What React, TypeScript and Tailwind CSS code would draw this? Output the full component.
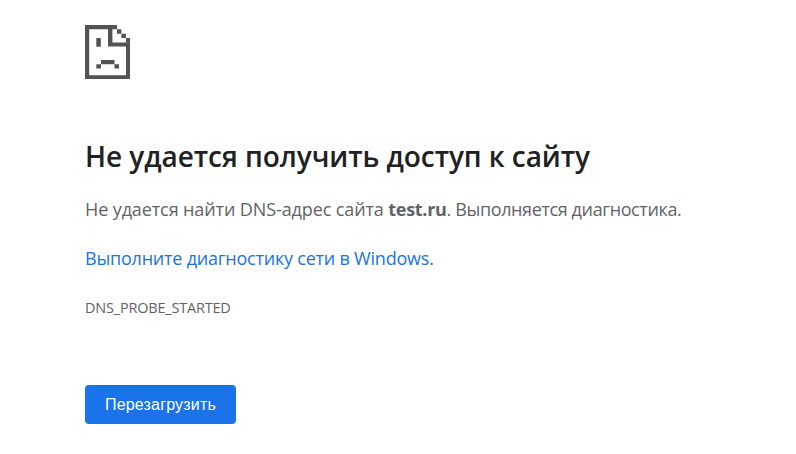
import React from "react"

// Sad page icon, drawn on a coarse pixel grid
const SadPageIcon = () => (
	<svg className="block h-[54.4px] w-[45.2px]" viewBox="0 0 45.2 54.4" fill="#535353">
		<path d="M0 0H32V4.2H4.2V50.2H41V17.5H45.2V54.4H0Z" />
		<path d="M23 4H27.4V17.4H45.2V21.5H23Z" />
		<path d="M32 4.2H36.4V8.7H32Z M36.4 8.7H41V13H36.4Z M41 13H45.2V17.6H41Z" />
		<path d="M11.3 13H15.8V21.7H11.3Z M16 35H29.5V39.3H16Z M11.3 39.3H16V43.5H11.3Z M29.5 39.3H34V43.5H29.5Z" />
	</svg>
)

export default function App() {
	return (
		<main className="h-[454px] w-[796px] bg-white pl-[85px] pt-[24.7px] font-['Open_Sans','Noto_Sans',sans-serif] text-[#5f6368]">
			<SadPageIcon />
			<h1 className="mt-[56.9px] whitespace-nowrap text-[28px] font-semibold leading-[40px] tracking-[-0.065px] text-[#202124]">
				Не удается получить доступ к сайту
			</h1>
			<p className="mt-[20px] whitespace-nowrap text-[18px] leading-[26px]">
				<span className="tracking-[-0.11px]">Не удается найти DNS-адрес сайта </span>
				<strong className="tracking-[-0.3px]">test.ru</strong>
				<span className="tracking-[-0.38px]">. Выполняется диагностика.</span>
			</p>
			<p className="mt-[23px] whitespace-nowrap text-[18px] leading-[26px] tracking-[-0.22px]">
				<a className="text-[#1a73e8]">Выполните диагностику сети в Windows</a>.
			</p>
			<div className="mt-[26px] whitespace-nowrap text-[14.5px] leading-[22px] tracking-[-0.2px]">
				DNS_PROBE_STARTED
			</div>
			<button className="mt-[66px] h-[39px] w-[151px] rounded-[4px] bg-[#1a73e8] pt-[2px] font-['Liberation_Sans',sans-serif] text-[16px] tracking-[0.18px] text-white">
				Перезагрузить
			</button>
		</main>
	)
}
